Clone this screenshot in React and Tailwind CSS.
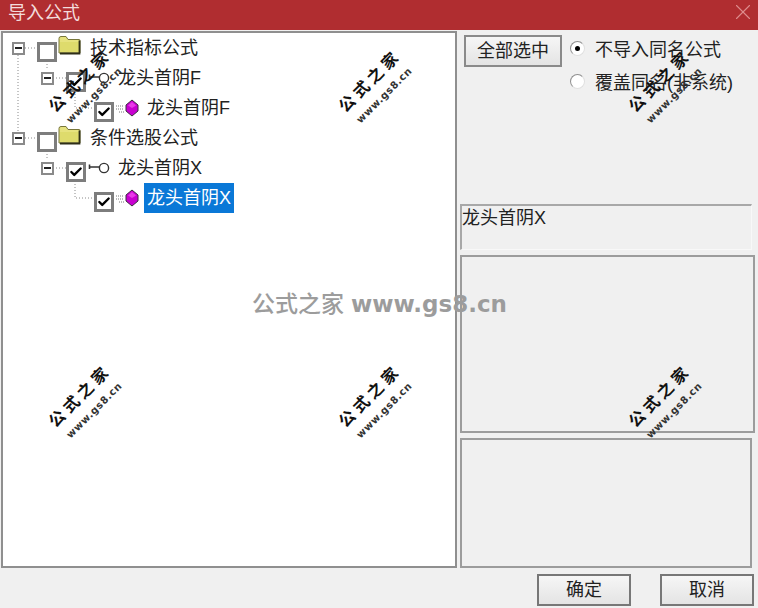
import { Check, X } from 'lucide-react'

const FONT = "font-['Liberation_Sans','Noto_Sans_CJK_SC',sans-serif]"

const ROWS = [
  { indent: 0, kind: 'folder', label: '技术指标公式', expander: true },
  { indent: 29, kind: 'key', label: '龙头首阴F', expander: true, checked: true },
  { indent: 57, kind: 'gem', label: '龙头首阴F', checked: true },
  { indent: 0, kind: 'folder', label: '条件选股公式', expander: true },
  { indent: 29, kind: 'key', label: '龙头首阴X', expander: true, checked: true },
  { indent: 57, kind: 'gem', label: '龙头首阴X', checked: true, selected: true },
]

const MARKS = [
  'left-[41px] top-[68px]', 'left-[331px] top-[68px]', 'left-[621px] top-[68px]',
  'left-[41px] top-[383px]', 'left-[331px] top-[383px]', 'left-[621px] top-[383px]',
]

function Folder() {
  return (
    <svg width="23" height="20" viewBox="0 0 23 20">
      <path d="M1 18V3.5Q1 1.5 3 1.5H8L10 4.5H21Q22 4.5 22 5.5V18Z" fill="#e6e27e" stroke="#77763a" />
      <path d="M2 7H21V17H2Z" fill="#dedb6c" />
      <path d="M21.5 5.5V18.5H2" fill="none" stroke="#2e2e18" strokeWidth="1.8" />
    </svg>
  )
}

function KeyIcon() {
  return (
    <svg width="23" height="12" viewBox="0 0 23 12">
      <path d="M1 5H11M1.5 2.5V7" fill="none" stroke="#333" strokeWidth="1.6" />
      <circle cx="16" cy="6" r="4.6" fill="#fff" stroke="#333" strokeWidth="1.4" />
    </svg>
  )
}

function GemIcon() {
  return (
    <svg width="23" height="18" viewBox="0 0 23 18">
      <path d="M0 7H8M0 10H8M3 13H8" stroke="#777" strokeDasharray="1 1" />
      <path d="M16 1L22 6V12L16 17L10 12V6Z" fill="#c800d0" stroke="#3b3040" />
      <path d="M16 3L20 6.5L16 9L12 6.5Z" fill="#e83ce8" />
    </svg>
  )
}

function Expander() {
  return (
    <div className="flex h-[13px] w-[13px] items-center justify-center border-2 border-[#8a8a8a] bg-white">
      <div className="h-[2px] w-[7px] bg-[#222]" />
    </div>
  )
}

function TreeRow({ row }) {
  const isFolder = row.kind === 'folder'
  const isKey = row.kind === 'key'
  return (
    <div className="flex h-[30px] items-center" style={{ paddingLeft: row.indent }}>
      <div className="flex w-[25px] justify-start">{row.expander && <Expander />}</div>
      <div className="mt-[7px] flex h-[20px] w-[20px] items-center justify-center border-[3px] border-[#7d7d7d] bg-white">
        {row.checked && <Check size={14} strokeWidth={4} className="text-black" />}
      </div>
      <div className={`flex ${isKey ? 'w-[29px]' : 'w-[30px]'} ${isFolder ? 'pl-[1px] -mt-[6px]' : 'pl-[2px]'}`}>
        {isFolder && <Folder />}
        {isKey && <KeyIcon />}
        {row.kind === 'gem' && <GemIcon />}
      </div>
      <span className={`px-[3px] text-[18px] leading-[30px] ${row.selected ? 'bg-[#0a78d7] text-white' : 'text-[#222]'}`}>
        {row.label}
      </span>
    </div>
  )
}

function Watermark({ place }) {
  return (
    <div className={`pointer-events-none absolute flex w-[90px] -rotate-45 flex-col items-center ${place}`}>
      <span className="whitespace-nowrap text-[16px] leading-[22px] font-semibold tracking-[4px] text-[#111]">公式之家</span>
      <span className="mt-[2px] whitespace-nowrap font-['DejaVu_Sans',sans-serif] text-[10px] leading-[14px] font-bold tracking-[0.6px] text-[#333]">www.gs8.cn</span>
    </div>
  )
}

function Radio({ checked, label }) {
  return (
    <div className="flex h-[24px] items-center">
      <div className="-mt-[4px] flex h-[15px] w-[15px] items-center justify-center rounded-full border border-[#8f8f8f] border-r-[#e0e0e0] border-b-[#e0e0e0] bg-white">
        {checked && <div className="h-[5px] w-[5px] rounded-full bg-black" />}
      </div>
      <span className="ml-[10px] text-[18px] leading-[24px] text-[#222]">{label}</span>
    </div>
  )
}

function DialogButton({ children, className }) {
  return (
    <button className={`flex items-center justify-center border-2 border-[#777] bg-gradient-to-b from-[#f6f6f6] to-[#e4e4e4] text-[18px] text-[#222] ${className}`}>
      {children}
    </button>
  )
}

export default function App() {
  return (
    <div className={`relative flex h-[608px] w-[758px] flex-col overflow-hidden bg-[#f0f0f0] ${FONT}`}>
      <div className="flex h-[30px] items-center justify-between bg-[#b02d30] pr-[2px] pl-[8px]">
        <span className="-mt-[3px] text-[18px] text-[#f3dcdc]">导入公式</span>
        <X size={26} strokeWidth={1} className="-mt-[6px] text-[#dd8d8d]" />
      </div>

      <div className="flex h-[538px] pt-[1px] pl-[1px]">
        {/* tree */}
        <div className="relative h-[537px] w-[456px] border-2 border-[#8f8f8f] bg-white pl-[9px]">
          <svg className="absolute top-0 left-0" width="200" height="200" fill="none" stroke="#8a8a8a" strokeDasharray="1 2">
            <path d="M15 22V99M22 15H34M22 105H34M44 28V37M44 118V127M50 45H63M50 135H63M72 58V75H91M72 148V165H91" />
          </svg>
          <div className="relative">
            {ROWS.map((row, i) => <TreeRow key={i} row={row} />)}
          </div>
        </div>

        {/* right column */}
        <div className="ml-[3px] flex w-[295px] flex-col">
          <div className="flex h-[173px] pt-[4px] pl-[4px]">
            <DialogButton className="h-[32px] w-[98px] !border-[#8a8a8a]">全部选中</DialogButton>
            <div className="ml-[8px] flex flex-col gap-[9px] pt-[3px]">
              <Radio checked label="不导入同名公式" />
              <Radio label="覆盖同名(非系统)" />
            </div>
          </div>
          <div className="h-[46px] w-[292px] border-t-2 border-r border-b border-l-2 border-t-[#a8a8a8] border-r-[#f8f8f8] border-b-[#f8f8f8] border-l-[#a8a8a8] text-[18px] leading-[24px] text-[#222]">
            龙头首阴X
          </div>
          <div className="mt-[5px] h-[178px] w-[295px] border-2 border-[#9c9c9c]" />
          <div className="mt-[5px] h-[130px] w-[292px] border-2 border-[#9c9c9c]" />
        </div>
      </div>

      <div className="flex flex-1 items-start justify-end gap-[29px] pt-[6px] pr-[4px]">
        <DialogButton className="h-[32px] w-[94px]">确定</DialogButton>
        <DialogButton className="h-[32px] w-[94px]">取消</DialogButton>
      </div>

      <div className="pointer-events-none absolute top-[290px] left-[252px] flex items-center text-[23px] leading-[28px] font-bold whitespace-nowrap text-[#9c9c9c]">
        <span className="font-medium">公式之家</span>
        <span className="ml-[7px] font-['DejaVu_Sans',sans-serif] text-[23px]">www.gs8.cn</span>
      </div>
      {MARKS.map(place => <Watermark key={place} place={place} />)}
    </div>
  )
}
